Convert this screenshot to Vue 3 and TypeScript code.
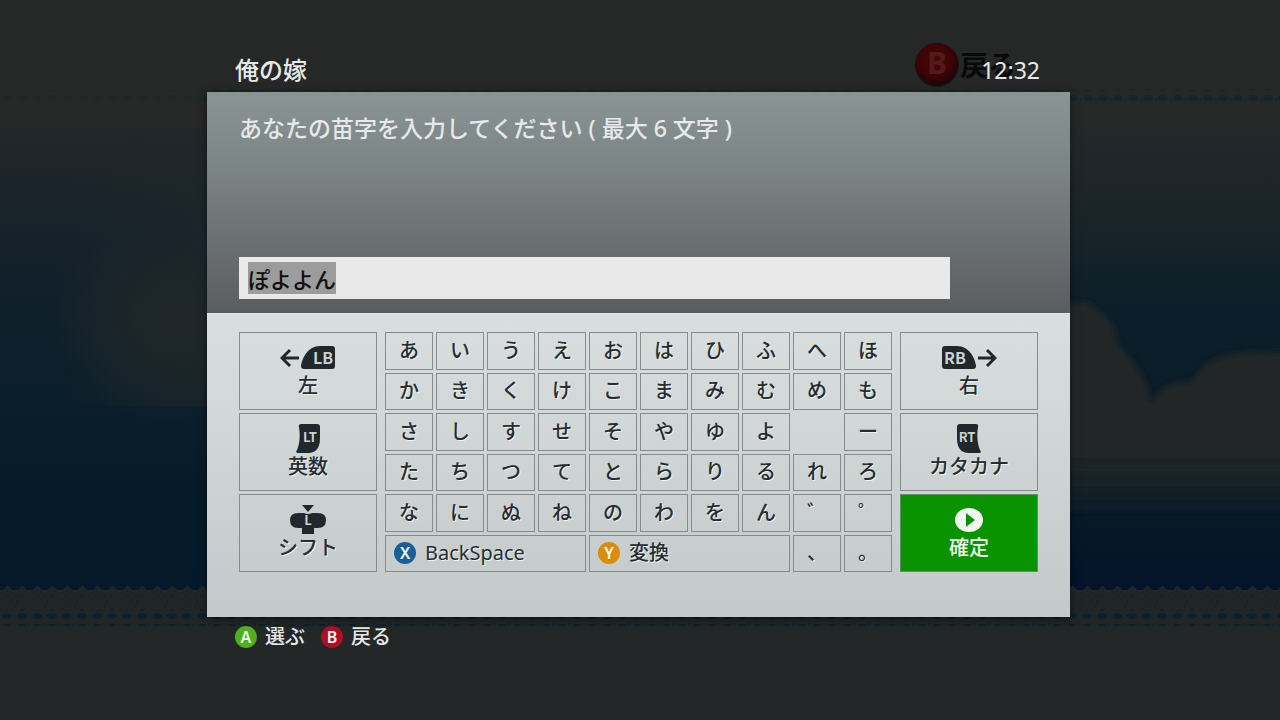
<script setup lang="ts">
import { onMounted, ref } from 'vue'

type Key = { label: string; kind: 'char' | 'blank' | 'backspace' | 'convert' }

const MAX_LENGTH = 6
const name = ref('ぽよよん')
const field = ref<HTMLInputElement | null>(null)

const rows = [
  'あいうえおはひふへほ',
  'かきくけこまみむめも',
  'さしすせそやゆよ ー',
  'たちつてとらりるれろ',
  'なにぬねのわをん゛゜',
]

const keys: Key[] = [
  ...rows.flatMap((row) =>
    [...row].map((c): Key => ({ label: c, kind: c === ' ' ? 'blank' : 'char' })),
  ),
  { label: 'BackSpace', kind: 'backspace' },
  { label: '変換', kind: 'convert' },
  { label: '、', kind: 'char' },
  { label: '。', kind: 'char' },
]

function press(key: Key) {
  if (key.kind === 'backspace') name.value = name.value.slice(0, -1)
  else if (key.kind === 'char' && name.value.length < MAX_LENGTH) name.value += key.label
}

onMounted(() => {
  field.value?.focus()
  field.value?.select()
})
</script>

<template>
  <div class="screen">
    <svg class="scene" viewBox="0 0 1280 720" preserveAspectRatio="xMidYMid slice" aria-hidden="true">
      <defs>
        <linearGradient id="sky-left" x1="0" y1="0" x2="0" y2="1">
          <stop offset="0" stop-color="#22282a" />
          <stop offset="0.25" stop-color="#15212a" />
          <stop offset="0.5" stop-color="#0c1f2b" />
          <stop offset="0.8" stop-color="#061b29" />
          <stop offset="1" stop-color="#041a2b" />
        </linearGradient>
        <linearGradient id="sky-right" x1="0" y1="0" x2="0" y2="1">
          <stop offset="0" stop-color="#23282a" />
          <stop offset="0.2" stop-color="#1a2428" />
          <stop offset="0.4" stop-color="#0b1e29" />
          <stop offset="0.75" stop-color="#0a1c27" />
          <stop offset="1" stop-color="#031329" />
        </linearGradient>
        <linearGradient id="cloud" x1="0" y1="0" x2="0" y2="1">
          <stop offset="0" stop-color="#222626" />
          <stop offset="0.7" stop-color="#202526" />
          <stop offset="1" stop-color="#202526" stop-opacity="0" />
        </linearGradient>
        <radialGradient id="mist">
          <stop offset="0" stop-color="#222829" stop-opacity="0.8" />
          <stop offset="0.5" stop-color="#222829" stop-opacity="0.5" />
          <stop offset="1" stop-color="#222829" stop-opacity="0" />
        </radialGradient>
        <linearGradient id="left-mist" x1="0" y1="0" x2="1" y2="0">
          <stop offset="0" stop-color="#20282a" stop-opacity="0" />
          <stop offset="1" stop-color="#20282a" stop-opacity="0.5" />
        </linearGradient>
        <radialGradient id="b-ball" cx="0.45" cy="0.4" r="0.6">
          <stop offset="0" stop-color="#450809" />
          <stop offset="0.7" stop-color="#3d0305" />
          <stop offset="1" stop-color="#1e0506" />
        </radialGradient>
        <filter id="cloud-edge" x="-10%" y="-10%" width="120%" height="120%">
          <feGaussianBlur stdDeviation="3" />
        </filter>
        <pattern id="scallop" width="15" height="8" patternUnits="userSpaceOnUse" y="585">
          <path d="M0 8 L5 3 Q7.500 -1 10 3 L15 8Z" fill="#202626" />
        </pattern>
        <pattern id="rosette" width="30" height="28" patternUnits="userSpaceOnUse" y="588">
          <circle cx="7" cy="13" r="10" fill="none" stroke="#182328" stroke-width="2" stroke-dasharray="3 2" />
          <circle cx="7" cy="13" r="5" fill="none" stroke="#1a2427" stroke-width="2" stroke-dasharray="2 2" />
          <circle cx="22" cy="22" r="2" fill="#14232a" />
          <circle cx="22" cy="8" r="2" fill="#1a2427" />
        </pattern>
        <pattern id="eyelet" width="15" height="18" patternUnits="userSpaceOnUse" y="612">
          <ellipse cx="7" cy="4" rx="5" ry="3" fill="#0a212d" />
          <ellipse cx="7" cy="13" rx="4" ry="1" fill="#0c202a" />
          <circle cx="14" cy="12" r="1" fill="#0c202a" />
        </pattern>
        <pattern id="eyelet-top" width="15" height="16" patternUnits="userSpaceOnUse" y="88">
          <ellipse cx="8" cy="10" rx="5" ry="3" fill="#14252c" />
          <ellipse cx="7" cy="2" rx="5" ry="1" fill="#1b2629" />
          <ellipse cx="1" cy="12" rx="1" ry="2" fill="#17262c" />
        </pattern>
      </defs>

      <rect width="1280" height="720" fill="#262828" />
      <rect y="126" width="640" height="464" fill="url(#sky-left)" />
      <rect x="640" y="126" width="640" height="464" fill="url(#sky-right)" />
      <rect x="60" y="126" width="150" height="280" fill="url(#left-mist)" />
      <ellipse cx="170" cy="325" rx="120" ry="100" fill="url(#mist)" />
      <path d="M1050 302L1088 303L1100 312L1113 324L1118 345L1134 362L1146 382L1151 402L1162 390L1172 384L1192 381L1204 366L1222 356L1250 352L1300 353V520H1050Z" fill="url(#cloud)" filter="url(#cloud-edge)" />

      <rect y="585" width="1280" height="8" fill="url(#scallop)" />
      <rect y="592" width="1280" height="36" fill="#202626" />
      <rect y="590" width="1280" height="24" fill="url(#rosette)" />
      <rect y="612" width="1280" height="16" fill="url(#eyelet)" />
      <rect y="627" width="1280" height="93" fill="#242727" />
      <rect y="88" width="1280" height="40" fill="#262827" />
      <rect y="88" width="205" height="16" fill="url(#eyelet-top)" opacity="0.400" />
      <rect x="205" y="88" width="1075" height="16" fill="url(#eyelet-top)" />

      <circle cx="937" cy="65" r="22" fill="#121414" />
      <circle cx="937" cy="64" r="21" fill="url(#b-ball)" />
      <text class="scene-b" x="937" y="74" text-anchor="middle">B</text>
      <text class="scene-back" x="960" y="76">戻る</text>
    </svg>

    <main class="dialog">
      <header class="title-bar">
        <h1>俺の嫁</h1>
        <time>12:32</time>
      </header>

      <section class="panel">
        <div class="entry">
          <label for="surname">あなたの苗字を入力してください ( 最大 6 文字 )</label>
          <input id="surname" ref="field" v-model="name" type="text" :maxlength="MAX_LENGTH" autocomplete="off" spellcheck="false" />
        </div>

        <div class="keyboard">
          <div class="side">
            <button type="button" class="wide-key">
              <svg width="56" height="30" viewBox="0 -3 56 30" aria-hidden="true">
                <path d="M19 12H2M10 4L2 12L10 20" class="arrow" />
                <path d="M21 20C22 12 28 0 40 0H52Q55 0 55 3V20Q55 23 52 23H24Q21 23 21 20Z" class="ink" />
                <text x="43" y="18" class="tag">LB</text>
              </svg>
              <span>左</span>
            </button>
            <button type="button" class="wide-key">
              <svg width="24" height="30" viewBox="0 0 24 30" aria-hidden="true">
                <path d="M3 3Q2 0 5 0H21Q24 0 24 3V14Q24 29 12 29H2Q-1 29 1 26Q5 17 3 3Z" class="ink" />
                <text x="14" y="18" class="tag small">LT</text>
              </svg>
              <span>英数</span>
            </button>
            <button type="button" class="wide-key">
              <svg width="36" height="30" viewBox="0 0 36 30" aria-hidden="true">
                <path d="M12 0H24L18 7Z" class="ink" />
                <path d="M8 8H14Q18 10 22 8H28Q36 8 36 15Q36 23 28 23H24V29H12V23H8Q0 23 0 15Q0 8 8 8Z" class="ink" />
                <text x="18" y="20" class="tag small">L</text>
              </svg>
              <span>シフト</span>
            </button>
          </div>

          <div class="keys">
            <template v-for="(key, i) in keys" :key="i">
              <span v-if="key.kind === 'blank'"></span>
              <button v-else type="button" class="key" :class="key.kind" @click="press(key)">
                <svg v-if="key.kind === 'backspace'" class="badge" viewBox="0 0 22 22" aria-hidden="true">
                  <circle cx="11" cy="11" r="11" fill="#1a5f98" />
                  <text x="11" y="17">X</text>
                </svg>
                <svg v-if="key.kind === 'convert'" class="badge" viewBox="0 0 22 22" aria-hidden="true">
                  <circle cx="11" cy="11" r="11" fill="#dc8d08" />
                  <text x="11" y="17">Y</text>
                </svg>
                <span>{{ key.label }}</span>
              </button>
            </template>
          </div>

          <div class="side">
            <button type="button" class="wide-key">
              <svg width="56" height="30" viewBox="0 -3 56 30" aria-hidden="true">
                <path d="M37 12H54M46 4L54 12L46 20" class="arrow" />
                <path d="M35 20C34 12 28 0 16 0H4Q1 0 1 3V20Q1 23 4 23H32Q35 23 35 20Z" class="ink" />
                <text x="14" y="18" class="tag">RB</text>
              </svg>
              <span>右</span>
            </button>
            <button type="button" class="wide-key">
              <svg width="24" height="30" viewBox="0 0 24 30" aria-hidden="true">
                <path d="M21 3Q22 0 19 0H3Q0 0 0 3V14Q0 29 12 29H22Q25 29 23 26Q19 17 21 3Z" class="ink" />
                <text x="10" y="18" class="tag small">RT</text>
              </svg>
              <span>カタカナ</span>
            </button>
            <button type="button" class="wide-key confirm">
              <svg width="28" height="30" viewBox="0 0 28 30" aria-hidden="true">
                <ellipse cx="14" cy="15" rx="14" ry="12" fill="#f2f7f0" />
                <path d="M11 8L20 15L11 22Z" fill="#0a9300" />
              </svg>
              <span>確定</span>
            </button>
          </div>
        </div>
      </section>

      <footer class="hints">
        <span class="hint">
          <svg class="badge" viewBox="0 0 22 22" aria-hidden="true">
            <circle cx="11" cy="11" r="11" fill="#4eb01c" />
            <text x="11" y="17">A</text>
          </svg>
          選ぶ
        </span>
        <span class="hint">
          <svg class="badge" viewBox="0 0 22 22" aria-hidden="true">
            <circle cx="11" cy="11" r="11" fill="#ad0f26" />
            <text x="11" y="17">B</text>
          </svg>
          戻る
        </span>
      </footer>
    </main>
  </div>
</template>

<style>
body {
  margin: 0;
  background: #252727;
}
</style>

<style scoped>
.screen {
  position: relative;
  display: grid;
  grid-template-columns: 207fr 863fr 210fr;
  min-height: 100vh;
  overflow: hidden;
  font-family: "Noto Sans", "Noto Sans CJK JP", sans-serif;
  font-size: 20px;
  font-weight: 500;
  color: #e6e9e9;
}

.scene {
  position: absolute;
  inset: 0;
  width: 100%;
  height: 100%;
}

.scene-b {
  font-size: 30px;
  font-weight: 700;
  fill: #55191b;
}

.scene-back {
  font-size: 28px;
  font-weight: 700;
  fill: #080909;
}

.dialog {
  position: relative;
  grid-column: 2;
  min-width: 0;
}

.title-bar {
  display: flex;
  justify-content: space-between;
  align-items: center;
  padding: 52px 30px 4px 28px;
  line-height: 36px;
}

h1 {
  margin: 0;
  font-size: 24px;
  font-weight: 500;
}

time {
  font-size: 23px;
  font-weight: 400;
}

.panel {
  box-shadow: 0 2px 8px rgba(0, 0, 0, 0.5);
}

.entry {
  display: flex;
  flex-direction: column;
  gap: 112px;
  padding: 20px 32px 14px;
  background: linear-gradient(#8b9495, #7d8687 32%, #6f7476 60%, #5a5d60);
}

label {
  font-size: 23px;
  line-height: 33px;
}

input {
  box-sizing: border-box;
  width: 89%;
  height: 42px;
  padding: 0 9px;
  border: 0;
  border-radius: 0;
  outline: 0;
  background: #e9e9e9;
  color: #111;
  caret-color: transparent;
  font: 500 22px/32px "Noto Sans CJK JP", sans-serif;
}

input::selection {
  background: #9c9c9c;
  color: #111;
}

.keyboard {
  display: grid;
  grid-template-columns: 138fr 507fr 138fr;
  gap: 8px;
  padding: 18px 32px 45px;
  border-top: 1px solid #e4e8e8;
  background: linear-gradient(#d8dfde, #ccd2d2 60%, #c3c9c9);
}

.side {
  display: grid;
  grid-template-rows: repeat(3, 78px);
  gap: 3px;
}

.keys {
  display: grid;
  grid-template-columns: repeat(10, minmax(0, 1fr));
  grid-template-rows: repeat(6, minmax(0, 1fr));
  gap: 3px;
}

button {
  display: flex;
  align-items: center;
  justify-content: center;
  min-width: 0;
  margin: 0;
  padding: 0;
  border: 1px solid #858c8f;
  border-radius: 0;
  background: transparent;
  color: #262d30;
  font: inherit;
  line-height: 26px;
  text-shadow: 1px 1px 0 #eef2f2;
}

.wide-key {
  flex-direction: column;
}

.confirm {
  border-color: #6a8a6c;
  background: #0a9300;
  color: #f2f7f0;
  text-shadow: none;
}

.backspace,
.convert {
  grid-column: span 4;
  justify-content: flex-start;
  gap: 9px;
  padding: 0 8px;
}

.backspace {
  font-weight: 400;
}

.ink {
  fill: #20282b;
}

.arrow {
  fill: none;
  stroke: #20282b;
  stroke-width: 3;
}

.tag {
  fill: #ccd2d2;
  font-family: "Noto Sans CJK JP", sans-serif;
  font-size: 16px;
  font-weight: 700;
  text-anchor: middle;
  text-shadow: none;
}

.tag.small {
  font-size: 13px;
}

.badge {
  flex: none;
  width: 22px;
  height: 22px;
}

.badge text {
  fill: #f4f6f4;
  font-size: 16px;
  font-weight: 600;
  text-anchor: middle;
  text-shadow: none;
}

.hints {
  display: flex;
  gap: 16px;
  padding: 5px 28px;
  line-height: 30px;
}

.hint {
  display: flex;
  align-items: center;
  gap: 8px;
}
</style>
